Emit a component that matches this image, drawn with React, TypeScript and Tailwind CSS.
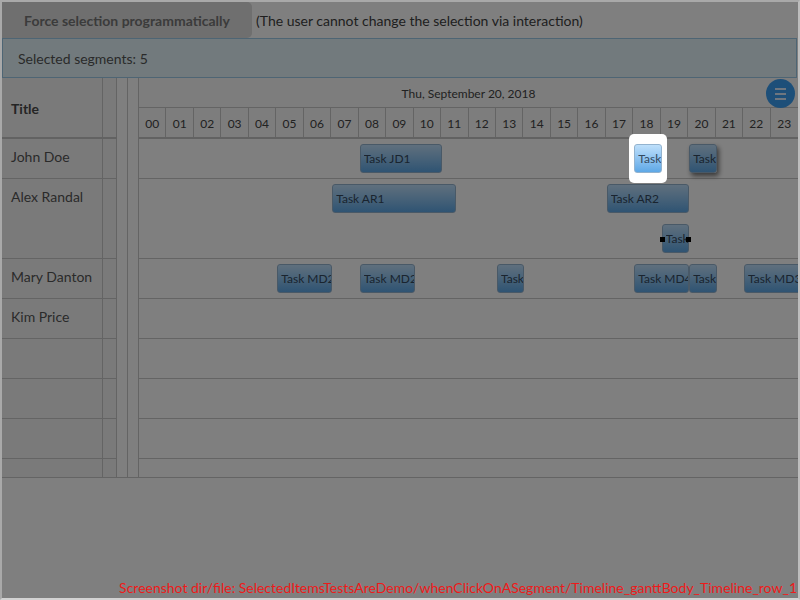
import React from "react";

type Seg = { s: number; e: number; t: string; lane?: number; sel?: boolean; hover?: boolean; handles?: boolean };
type Row = { name: string; h: number; segs: Seg[] };

const HOURS = Array.from({ length: 24 }, (_, i) => String(i).padStart(2, "0"));

const ROWS: Row[] = [
  {
    name: "John Doe",
    h: 40,
    segs: [
      { s: 8, e: 11, t: "Task JD1" },
      { s: 18, e: 19, t: "Task", sel: true },
      { s: 20, e: 21, t: "Task", hover: true },
    ],
  },
  {
    name: "Alex Randal",
    h: 80,
    segs: [
      { s: 7, e: 11.5, t: "Task AR1" },
      { s: 17, e: 20, t: "Task AR2" },
      { s: 19, e: 20, t: "Task", lane: 1, handles: true },
    ],
  },
  {
    name: "Mary Danton",
    h: 40,
    segs: [
      { s: 5, e: 7, t: "Task MD2" },
      { s: 8, e: 10, t: "Task MD2" },
      { s: 13, e: 14, t: "Task" },
      { s: 18, e: 20, t: "Task MD4" },
      { s: 20, e: 21, t: "Task" },
      { s: 22, e: 24.6, t: "Task MD3" },
    ],
  },
  { name: "Kim Price", h: 40, segs: [] },
  { name: "", h: 40, segs: [] },
  { name: "", h: 40, segs: [] },
  { name: "", h: 40, segs: [] },
  { name: "", h: 40, segs: [] },
];

function Segment({ seg }: { seg: Seg }) {
  const left = (seg.s / 24) * 100;
  const width = ((seg.e - seg.s) / 24) * 100;
  const top = 5 + (seg.lane ?? 0) * 40;
  return (
    <>
      {seg.sel && (
        <div
          className="absolute z-20 h-[49px] rounded-[5px] bg-white"
          style={{ left: `calc(${left}% - 4px)`, width: `calc(${width}% + 10px)`, top: top - 10 }}
        />
      )}
      <div
        className={
          "absolute flex h-[29px] items-center rounded-[3px] border border-[#93b3cf] bg-gradient-to-b from-[#bfe0fb] to-[#5ea8e6] pl-[3px] pt-[1px] text-[12px] text-[#34495e] whitespace-nowrap " +
          (seg.sel ? "z-30 " : "") +
          (seg.hover ? "shadow-[2px_3px_5px_rgba(0,0,0,0.55)] " : "")
        }
        style={{ left: `calc(${left}% + 1px)`, width: `${width}%`, top }}
      >
        <span className="block overflow-hidden">{seg.t}</span>
        {seg.handles && (
          <>
            <span className="absolute left-[-3px] top-[12px] h-[5px] w-[5px] bg-black" />
            <span className="absolute right-[-3px] top-[12px] h-[5px] w-[5px] bg-black" />
          </>
        )}
      </div>
    </>
  );
}

export default function App() {
  return (
    <div className="relative h-[600px] w-[800px] overflow-hidden border-2 border-[#a9a9a9] border-b-[#d2d2d2] border-r-[#bdbdbd] bg-white font-['Lato','Noto_Sans',sans-serif] text-[#444]">
      {/* top bar */}
      <div className="flex h-[36px] items-center">
        <div className="flex h-full w-[250px] items-center justify-center rounded-r-[5px] bg-[#dedede] text-[14px] font-bold text-[#777]">
          Force selection programmatically
        </div>
        <div className="ml-[4px] text-[14px] text-[#3e3e3e]">
          (The user cannot change the selection via interaction)
        </div>
      </div>

      {/* alert */}
      <div className="mr-[1px] flex h-[40px] items-center border border-[#9ccbe8] bg-[#e4f5fb] pl-[15px] text-[14px] text-[#555]">
        Selected segments: 5
      </div>

      {/* gantt */}
      <div className="flex h-[400px] overflow-hidden border-b border-[#c8c8c8]">
        {/* left table */}
        <div className="flex w-[115px] shrink-0 flex-col bg-[#f5f5f5]">
          <div className="flex h-[61px] shrink-0 border-b-2 border-[#c4c4c4]">
            <div className="flex w-[101px] items-center border-r border-[#c8c8c8] pl-[9px] pt-[2px] text-[14px] font-bold text-[#4a4a4a]">
              Title
            </div>
            <div className="w-[14px] border-r border-[#c8c8c8]" />
          </div>
          {ROWS.map((r, i) => (
            <div key={i} className="flex shrink-0 border-b border-[#c8c8c8]" style={{ height: r.h }}>
              <div className="w-[101px] border-r border-[#c8c8c8] pl-[9px] pt-[9px] text-[14px] leading-[18px] text-[#555]">
                {r.name}
              </div>
              <div className="w-[14px] border-r border-[#c8c8c8]" />
            </div>
          ))}
        </div>

        {/* splitter */}
        <div className="w-[10px] shrink-0" />
        <div className="w-[1px] shrink-0 bg-[#c8c8c8]" />
        <div className="w-[10px] shrink-0" />

        {/* timeline */}
        <div className="relative flex min-w-0 flex-1 flex-col border-l border-[#c8c8c8]">
          <div className="relative h-[61px] shrink-0 border-b-2 border-[#c4c4c4] bg-[#fafafa]">
            <div className="flex h-[30px] items-center justify-center border-b border-[#c8c8c8] pt-[2px] text-[12px] text-[#444]">
              Thu, September 20, 2018
            </div>
            <div className="grid h-[29px] grid-cols-[repeat(24,minmax(0,1fr))]">
              {HOURS.map((h, i) => (
                <div
                  key={h}
                  className={
                    "flex items-center justify-center pt-[3px] text-[12px] text-[#444] " +
                    (i < 23 ? "border-r border-[#c8c8c8]" : "")
                  }
                >
                  {h}
                </div>
              ))}
            </div>
            <div className="absolute right-[3px] top-[1px] flex h-[29px] w-[29px] flex-col items-center justify-center gap-[3px] rounded-full bg-[#3a9ef2]">
              <span className="h-[2px] w-[11px] bg-[#dcecff]" />
              <span className="h-[2px] w-[11px] bg-[#dcecff]" />
              <span className="h-[2px] w-[11px] bg-[#dcecff]" />
            </div>
          </div>
          {ROWS.map((r, i) => (
            <div key={i} className="relative shrink-0 border-b border-[#c8c8c8]" style={{ height: r.h }}>
              {r.segs.map((s, j) => (
                <Segment key={j} seg={s} />
              ))}
            </div>
          ))}
        </div>
      </div>

      {/* dim overlay */}
      <div className="absolute inset-0 z-10 bg-black/50" />

      {/* caption */}
      <div className="absolute bottom-0 right-[1px] z-20 text-[14px] leading-[20px] text-[#ee1a1a] whitespace-nowrap">
        Screenshot dir/file: SelectedItemsTestsAreDemo/whenClickOnASegment/Timeline_ganttBody_Timeline_row_1
      </div>
    </div>
  );
}
